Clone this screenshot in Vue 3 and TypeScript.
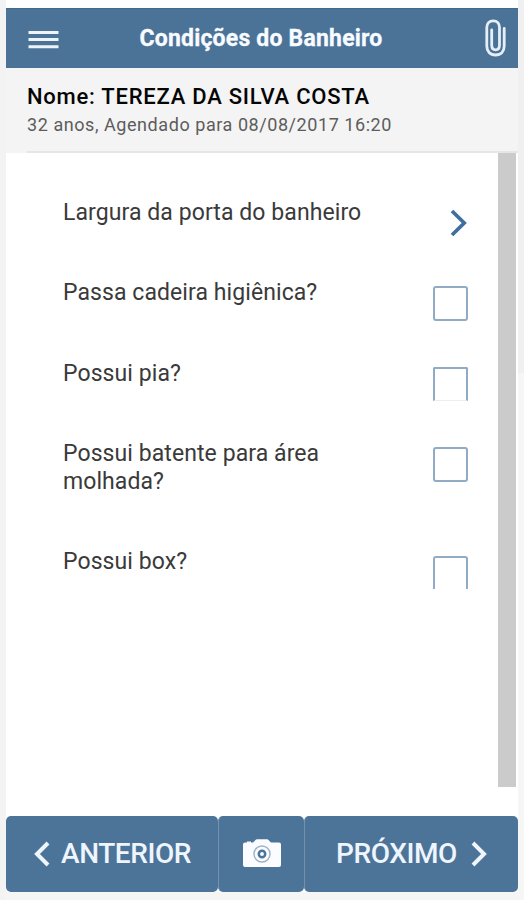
<script setup lang="ts">
import { ref } from 'vue'

interface Question {
  id: string
  label: string
  kind: 'link' | 'check'
}

const questions: Question[] = [
  { id: 'largura', label: 'Largura da porta do banheiro', kind: 'link' },
  { id: 'cadeira', label: 'Passa cadeira higiênica?', kind: 'check' },
  { id: 'pia', label: 'Possui pia?', kind: 'check' },
  { id: 'batente', label: 'Possui batente para área molhada?', kind: 'check' },
  { id: 'boxe', label: 'Possui box?', kind: 'check' },
]

const answers = ref<Record<string, boolean>>({})

function toggle(id: string): void {
  answers.value[id] = !answers.value[id]
}
</script>

<template>
  <div class="screen">
    <div class="frame">
      <header class="topbar">
        <button class="icon-button menu" type="button">
          <svg width="32" height="20" viewBox="0 0 32 20">
            <path d="M0.500 2.400H30.500M0.500 9.600H30.500M0.500 16.800H30.500" stroke="#eff4fa" stroke-width="3" />
          </svg>
        </button>
        <h1 class="title">Condições do Banheiro</h1>
        <button class="icon-button clip" type="button">
          <svg width="24" height="40" viewBox="0 0 24 40">
            <path
              d="M20.200 9.500V27C20.200 32.500 17 36 11.500 36C6 36 2.800 32.500 2.800 27V8.500C2.800 4.500 5.200 1.800 9.200 1.800C13.200 1.800 15.500 4.500 15.500 8.500V26C15.500 29 14 30.800 11.600 30.800C9.200 30.800 7.700 29 7.700 26V11"
              fill="none" stroke="#e6eef7" stroke-width="2.800" stroke-linecap="round"
            />
          </svg>
        </button>
      </header>

      <section class="patient">
        <h2 class="name">Nome: TEREZA DA SILVA COSTA</h2>
        <p class="details">32 anos, Agendado para 08/08/2017 16:20</p>
      </section>

      <main class="content">
        <ul class="questions">
          <li v-for="q in questions" :key="q.id" class="question" :class="q.id">
            <span class="label">{{ q.label }}</span>
            <svg v-if="q.kind === 'link'" class="arrow" width="18" height="28" viewBox="0 0 18 28">
              <path d="M2 2L14.200 14L2 26" fill="none" stroke="#3f6f9f" stroke-width="3.700" />
            </svg>
            <button
              v-else class="checkbox" :class="{ checked: answers[q.id] }"
              type="button" role="checkbox" :aria-checked="!!answers[q.id]" @click="toggle(q.id)"
            />
          </li>
        </ul>
        <div class="scrollbar" />
      </main>

      <nav class="actions">
        <button class="action previous" type="button">
          <svg width="16" height="26" viewBox="0 0 16 26">
            <path d="M14 2L3 13L14 24" fill="none" stroke="#eff5fc" stroke-width="4" />
          </svg>
          <span>ANTERIOR</span>
        </button>
        <button class="action camera" type="button">
          <svg width="40" height="32" viewBox="0 0 40 32">
            <path
              d="M3 4.500H5V3.500H9V4.500H11L13.500 2Q14 1.200 15 1.200H25Q26 1.200 26.500 2L29 4.500H37Q39 4.500 39 6.500V27Q39 29 37 29H3Q1 29 1 27V6.500Q1 4.500 3 4.500Z"
              fill="#fafcff"
            />
            <circle cx="20" cy="16" r="8" fill="none" stroke="#9fb3c6" stroke-width="1.500" />
            <circle cx="20" cy="16" r="3.200" fill="none" stroke="#4c7499" stroke-width="2.500" />
          </svg>
        </button>
        <button class="action next" type="button">
          <span>PRÓXIMO</span>
          <svg width="16" height="26" viewBox="0 0 16 26">
            <path d="M2 2L13 13L2 24" fill="none" stroke="#eff5fc" stroke-width="4" />
          </svg>
        </button>
      </nav>
    </div>
    <div class="edge"><div class="thumb" /></div>
  </div>
</template>

<style>
body {
  background: #f3f3f3;
  overflow: hidden;
}
</style>

<style scoped>
* {
  box-sizing: border-box;
}
button {
  border: 0;
  padding: 0;
  background: none;
  font: inherit;
  color: inherit;
}
svg {
  display: block;
  flex: none;
}
.screen {
  display: flex;
  width: 524px;
  height: 900px;
  padding-left: 6px;
  background: #f3f3f3;
  font-family: Roboto, sans-serif;
}
.frame {
  display: flex;
  flex-direction: column;
  width: 512px;
  padding-top: 8px;
  border-bottom: 8px solid #f5f5f5;
  background: #fff;
}
.topbar {
  display: flex;
  align-items: center;
  height: 60px;
  padding: 0 10px 0 22px;
  background: #4b7398;
  border-top: 1px solid #426a90;
  color: #f8fbff;
}
.menu {
  width: 32px;
  padding-top: 3px;
}
.title {
  flex: 1;
  margin: 0 22px 0 0;
  padding-top: 1px;
  text-align: center;
  font-size: 23px;
  line-height: 28px;
  font-weight: 700;
  letter-spacing: 0.200px;
  -webkit-text-stroke: 0.300px #f8fbff;
  white-space: nowrap;
}
.clip {
  width: 24px;
}
.patient {
  height: 85px;
  padding: 15px 21px 0;
  background: linear-gradient(#e6e6e6, #e6e6e6) 21px 100% / 491px 2px no-repeat #f4f4f4;
}
.name {
  margin: 0;
  font-size: 22px;
  line-height: 28px;
  font-weight: 500;
  color: #050505;
  letter-spacing: 0.760px;
  white-space: nowrap;
}
.details {
  margin: 2px 0 0;
  font-size: 18px;
  line-height: 24px;
  color: #5c5c5c;
  letter-spacing: 0.560px;
  white-space: nowrap;
}
.content {
  display: flex;
  height: 634px;
}
.questions {
  flex: 1;
  margin: 0;
  padding: 46px 30px 0 57px;
  list-style: none;
}
.question {
  display: flex;
  align-items: flex-start;
  justify-content: space-between;
  height: 80px;
}
.question.cadeira {
  height: 81px;
}
.question.batente {
  height: 108px;
}
.label {
  width: 310px;
  font-size: 23px;
  line-height: 28px;
  color: #3a3a3a;
  letter-spacing: 0.080px;
}
.batente .label {
  width: 280px;
}
.arrow {
  margin-top: 10px;
}
.checkbox {
  width: 35px;
  height: 35px;
  margin-top: 7px;
  border: 2px solid #91abc4;
  border-radius: 3px;
}
.checkbox.checked {
  background: #4b7398;
}
.pia .checkbox {
  height: 34px;
  border-bottom: 1px solid #eee;
  border-radius: 2px 2px 0 0;
}
.boxe .checkbox {
  height: 33px;
  margin-top: 8px;
  border-bottom: 0;
  border-radius: 3px 3px 0 0;
}
.scrollbar {
  width: 18px;
  margin-right: 2px;
  background: #cbcbcb;
}
.actions {
  display: grid;
  grid-template-columns: 212px 86px 214px;
  height: 76px;
  margin-top: 29px;
}
.action {
  display: flex;
  align-items: center;
  border-radius: 5px;
  background: #4c7499;
  color: #eff5fc;
  font-size: 28px;
  line-height: 36px;
  font-weight: 500;
  letter-spacing: -0.420px;
}
.action + .action {
  border-left: 1px solid #7391ae;
}
.previous {
  gap: 11px;
  padding-left: 28px;
}
.camera {
  justify-content: center;
}
.next {
  gap: 14px;
  padding-left: 31px;
}
.edge {
  flex: 1;
  padding-top: 373px;
  background: #f0f0f0;
}
.thumb {
  height: 527px;
  background: #f6f6f6;
}
</style>
